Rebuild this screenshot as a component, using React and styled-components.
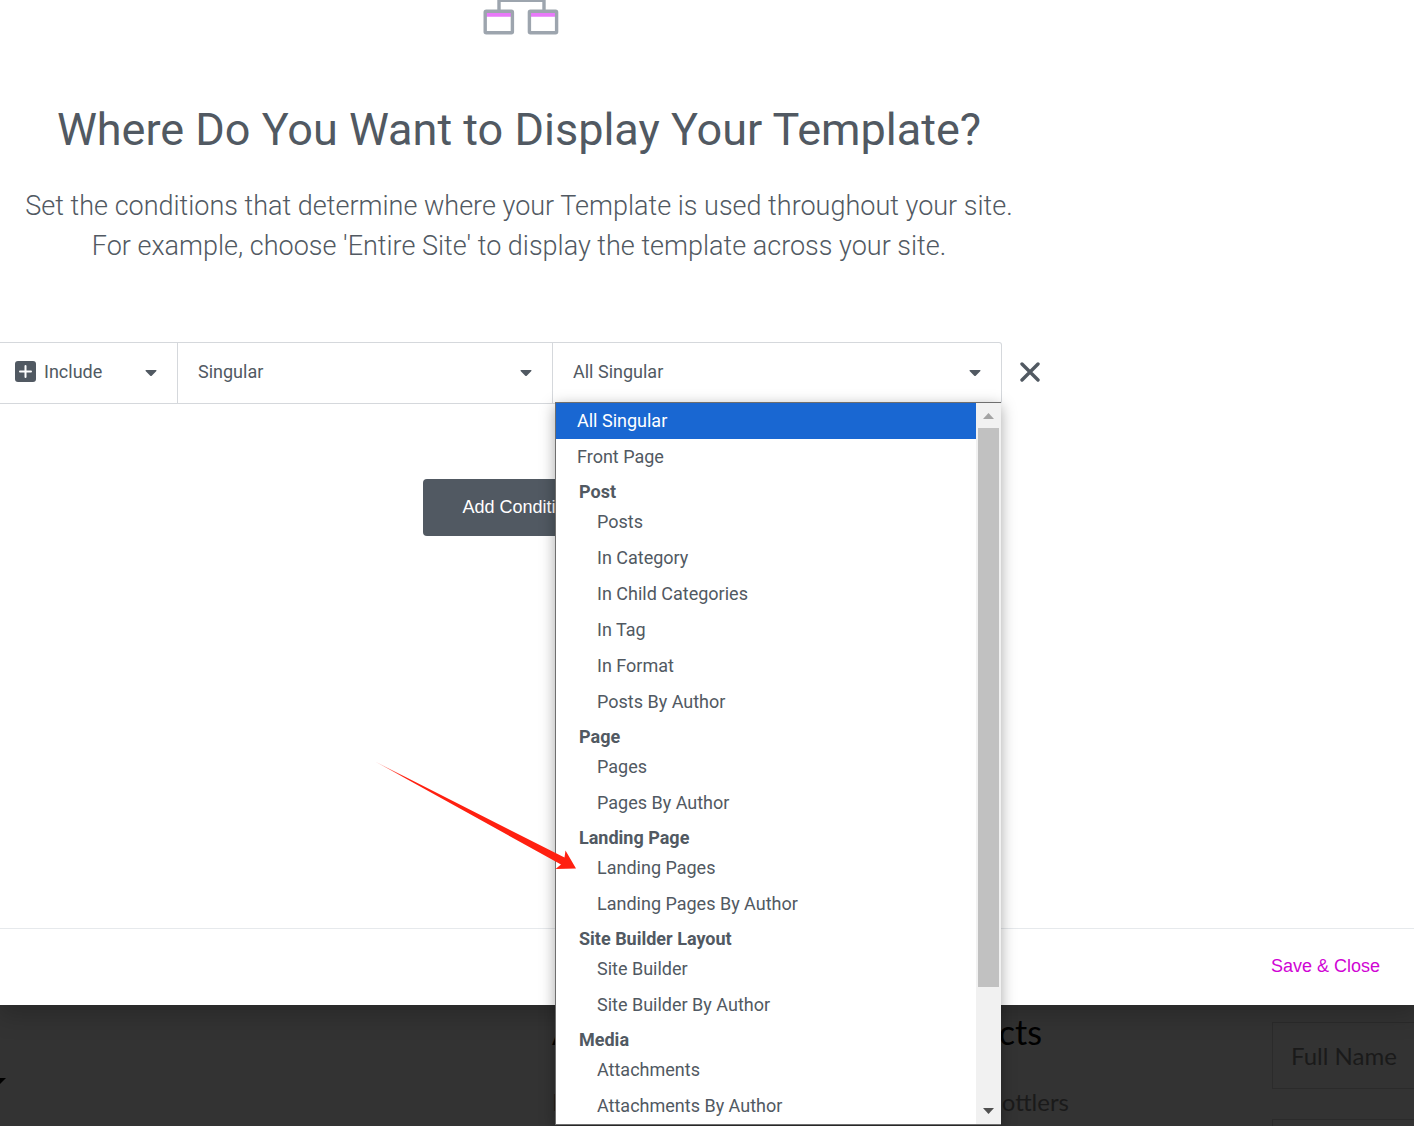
import React from 'react'
import styled, { createGlobalStyle } from 'styled-components'

const GlobalStyle = createGlobalStyle`
    * {
        box-sizing: border-box;
    }
    body {
        margin: 0;
        color: #515962;
        font-family: Roboto, sans-serif;
        font-size: 18px;
    }
    h1, h2, p, ul {
        margin: 0;
        padding: 0;
    }
    ul {
        list-style: none;
    }
    button {
        border: 0;
        cursor: pointer;
        font: 18px "Liberation Sans", Arial, sans-serif;
    }
`

const Screen = styled.div`
    display: flex;
    flex-direction: column;
    height: 100vh;
    overflow: hidden;
    background: #333333;
`

const Modal = styled.div`
    position: relative;
    z-index: 1;
    flex: 1;
    display: flex;
    flex-direction: column;
    background: #ffffff;
    box-shadow: 2px 8px 23px 3px rgba(0, 0, 0, 0.2);
`

const ModalBody = styled.main`
    flex: 1;
`

const Intro = styled.header`
    max-width: 1038px;
    text-align: center;
`

const Logo = styled.svg`
    display: block;
    margin: 0 auto;
`

const Title = styled.h1`
    margin-top: 68px;
    font-size: 45px;
    font-weight: 400;
    line-height: 54px;
`

const Description = styled.p`
    margin-top: 29px;
    font-size: 27px;
    font-weight: 300;
    line-height: 40px;
`

const ConditionRow = styled.div`
    display: flex;
    max-width: 1058px;
    margin-top: 76px;
`

const Fields = styled.div`
    flex: 1;
    display: grid;
    grid-template-columns: 178px 375fr 448fr;
    height: 62px;
    border: 1px solid #d5d8dc;
    border-left: 0;
    border-radius: 0 3px 3px 0;
`

const Field = styled.div`
    position: relative;
    display: flex;
    align-items: center;
    border-right: ${props => props.$last ? '0' : '1px solid #d5d8dc'};
    > svg {
        flex: none;
        pointer-events: none;
    }
`

const Caret = styled.svg`
    margin-left: -32px;
    margin-right: 20px;
`

const IncludeIcon = styled.svg`
    margin-left: 15px;
    margin-right: -36px;
    margin-bottom: 3px;
`

const Select = styled.select`
    flex: 1;
    min-width: 0;
    height: 60px;
    padding: 0 40px 4px ${props => props.$icon ? '44px' : '20px'};
    border: 0;
    appearance: none;
    background: transparent;
    color: inherit;
    font: inherit;
`

const RemoveButton = styled.button`
    display: flex;
    align-items: center;
    justify-content: center;
    width: 56px;
    padding: 0 0 2px;
    background: none;
`

const Menu = styled.div`
    position: absolute;
    z-index: 2;
    top: 59px;
    left: 2px;
    right: 0;
    display: flex;
    border: 1px solid #6e6e6e;
    border-right: 0;
    background: #ffffff;
    box-shadow: 0 4px 14px rgba(0, 0, 0, 0.35);
`

const Options = styled.ul`
    flex: 1;
`

const Option = styled.li`
    padding-left: ${props => props.$nested ? '41px' : '21px'};
    background: ${props => props.$selected ? '#1967d2' : 'transparent'};
    color: ${props => props.$selected ? '#ffffff' : 'inherit'};
    line-height: 36px;
`

const GroupLabel = styled.div`
    height: 29px;
    padding-left: 23px;
    font-weight: 700;
    line-height: 34px;
`

const Scrollbar = styled.div`
    display: flex;
    flex-direction: column;
    align-items: center;
    width: 25px;
    background: #f1f1f1;
`

const ScrollTrack = styled.div`
    flex: 1;
    width: 21px;
`

const ScrollThumb = styled.div`
    height: calc(100% * 5 / 6);
    background: #c1c1c1;
`

const Arrow = styled.svg`
    position: absolute;
    top: 357px;
    left: -183px;
    pointer-events: none;
`

const AddRow = styled.div`
    max-width: 1038px;
    margin-top: 75px;
    text-align: center;
`

const AddButton = styled.button`
    height: 57px;
    padding: 0 39px;
    border-radius: 4px;
    background: #515962;
    color: #ffffff;
`

const ModalFooter = styled.footer`
    display: flex;
    align-items: center;
    justify-content: flex-end;
    height: 77px;
    padding-right: 34px;
    border-top: 1px solid #e6e9ec;
`

const SaveButton = styled.button`
    padding: 0 0 2px;
    background: none;
    color: #d004d4;
`

const PageBehind = styled.div`
    flex: 0 0 121px;
    display: grid;
    grid-template-columns: 552px 720px 1fr;
    overflow: hidden;
    color: #1a1a1a;
    font-family: Lato, sans-serif;
    font-size: 24px;
`

const MenuCaret = styled.svg`
    margin-top: 73px;
`

const Products = styled.section`
    h2 {
        width: 490px;
        margin-top: 7px;
        color: #000000;
        font-size: 34px;
        font-weight: 400;
        line-height: 40px;
    }
    p {
        width: 517px;
        margin-top: 34px;
        line-height: 32px;
    }
    h2, p {
        display: flex;
        justify-content: space-between;
    }
`

const ContactForm = styled.form`
    display: flex;
    flex-direction: column;
    gap: 30px;
    padding-top: 17px;
    input {
        flex: none;
        width: 300px;
        height: 67px;
        padding: 0 18px;
        border: 1px solid #2b2b2b;
        background: transparent;
        font: inherit;
    }
    input::placeholder {
        color: #1a1a1a;
    }
`

const options = [
    { label: 'All Singular', selected: true },
    { label: 'Front Page' },
]

const groups = [
    { label: 'Post', items: ['Posts', 'In Category', 'In Child Categories', 'In Tag', 'In Format', 'Posts By Author'] },
    { label: 'Page', items: ['Pages', 'Pages By Author'] },
    { label: 'Landing Page', items: ['Landing Pages', 'Landing Pages By Author'] },
    { label: 'Site Builder Layout', items: ['Site Builder', 'Site Builder By Author'] },
    { label: 'Media', items: ['Attachments', 'Attachments By Author'] },
]

function SelectCaret() {
    return (
        <Caret width="12" height="8" viewBox="0 0 12 8" aria-hidden="true">
            <path d="M1 1h10a.6.6 0 0 1 .4 1L7 6.6a1.4 1.4 0 0 1-2 0L.6 2A.6.6 0 0 1 1 1Z" fill="#515962" />
        </Caret>
    )
}

function TemplateLogo() {
    return (
        <Logo width="80" height="35" viewBox="0 0 80 35" aria-hidden="true">
            <path d="M7 12h26v4.7H7zM51 12h26v4.7H51z" fill="#e879f9" />
            <g fill="none" stroke="#9da5ae" strokeWidth="3.4">
                <path d="M20 11V.2h45V11" />
                <rect x="6.2" y="11.2" width="27.2" height="21.6" rx="1" />
                <rect x="50.4" y="11.2" width="27.2" height="21.6" rx="1" />
            </g>
        </Logo>
    )
}

function ConditionMenu() {
    return (
        <Menu>
            <Options role="listbox" aria-label="Singular conditions">
                {options.map(option => (
                    <Option key={option.label} role="option" aria-selected={!!option.selected} $selected={option.selected}>
                        {option.label}
                    </Option>
                ))}
                {groups.map(group => (
                    <li key={group.label} role="presentation">
                        <GroupLabel>{group.label}</GroupLabel>
                        <ul role="group" aria-label={group.label}>
                            {group.items.map(item => (
                                <Option key={item} role="option" aria-selected={false} $nested>{item}</Option>
                            ))}
                        </ul>
                    </li>
                ))}
            </Options>
            <Scrollbar aria-hidden="true">
                <svg width="25" height="25" viewBox="0 0 25 25"><path d="M7 16h11l-5.5-6z" fill="#a3a3a3" /></svg>
                <ScrollTrack>
                    <ScrollThumb />
                </ScrollTrack>
                <svg width="25" height="25" viewBox="0 0 25 25"><path d="M7 9h11l-5.5 6z" fill="#505050" /></svg>
            </Scrollbar>
            <Arrow width="204" height="112" viewBox="0 0 204 112" aria-hidden="true">
                <defs>
                    <linearGradient id="arrowFade" x1="0" y1="0" x2="1" y2="0">
                        <stop offset="0" stopColor="#ff2010" stopOpacity="0.4" />
                        <stop offset="0.15" stopColor="#ff2010" />
                    </linearGradient>
                </defs>
                <path d="M2 1.5 191.5 97.5 192.5 90.5 203 108.5 182.5 109 188 104.5Z" fill="url(#arrowFade)" />
            </Arrow>
        </Menu>
    )
}

export default function App() {
    return (
        <>
            <GlobalStyle />
            <Screen>
                <Modal role="dialog" aria-labelledby="modal-title">
                    <ModalBody>
                        <Intro>
                            <TemplateLogo />
                            <Title id="modal-title">Where Do You Want to Display Your Template?</Title>
                            <Description>
                                Set the conditions that determine where your Template is used throughout your site.
                                <br />
                                For example, choose 'Entire Site' to display the template across your site.
                            </Description>
                        </Intro>
                        <ConditionRow>
                            <Fields>
                                <Field>
                                    <IncludeIcon width="21" height="21" viewBox="0 0 21 21" aria-hidden="true">
                                        <rect width="21" height="21" rx="3" fill="#515962" />
                                        <path d="M10.5 5v11M5 10.5h11" stroke="#ffffff" strokeWidth="2" strokeLinecap="round" />
                                    </IncludeIcon>
                                    <Select $icon aria-label="Condition type" defaultValue="Include">
                                        <option>Include</option>
                                        <option>Exclude</option>
                                    </Select>
                                    <SelectCaret />
                                </Field>
                                <Field>
                                    <Select aria-label="Condition" defaultValue="Singular">
                                        <option>Singular</option>
                                    </Select>
                                    <SelectCaret />
                                </Field>
                                <Field $last>
                                    <Select aria-label="Sub condition" defaultValue="All Singular">
                                        <option>All Singular</option>
                                    </Select>
                                    <SelectCaret />
                                    <ConditionMenu />
                                </Field>
                            </Fields>
                            <RemoveButton type="button" aria-label="Remove condition">
                                <svg width="20" height="20" viewBox="0 0 20 20" aria-hidden="true">
                                    <path d="m2 2 16 16M18 2 2 18" stroke="#515962" strokeWidth="3.4" strokeLinecap="round" />
                                </svg>
                            </RemoveButton>
                        </ConditionRow>
                        <AddRow>
                            <AddButton type="button">Add Condition</AddButton>
                        </AddRow>
                    </ModalBody>
                    <ModalFooter>
                        <SaveButton type="button">Save &amp; Close</SaveButton>
                    </ModalFooter>
                </Modal>
                <PageBehind>
                    <MenuCaret width="6" height="6" viewBox="0 0 6 6" aria-hidden="true">
                        <path d="M0 0h6L0 6z" fill="#000000" />
                    </MenuCaret>
                    <Products>
                        <h2><span>A</span><span>Products</span></h2>
                        <p><span>I</span><span>Bottlers</span></p>
                    </Products>
                    <ContactForm>
                        <input type="text" placeholder="Full Name" aria-label="Full Name" />
                        <input type="email" aria-label="Email" />
                    </ContactForm>
                </PageBehind>
            </Screen>
        </>
    )
}
